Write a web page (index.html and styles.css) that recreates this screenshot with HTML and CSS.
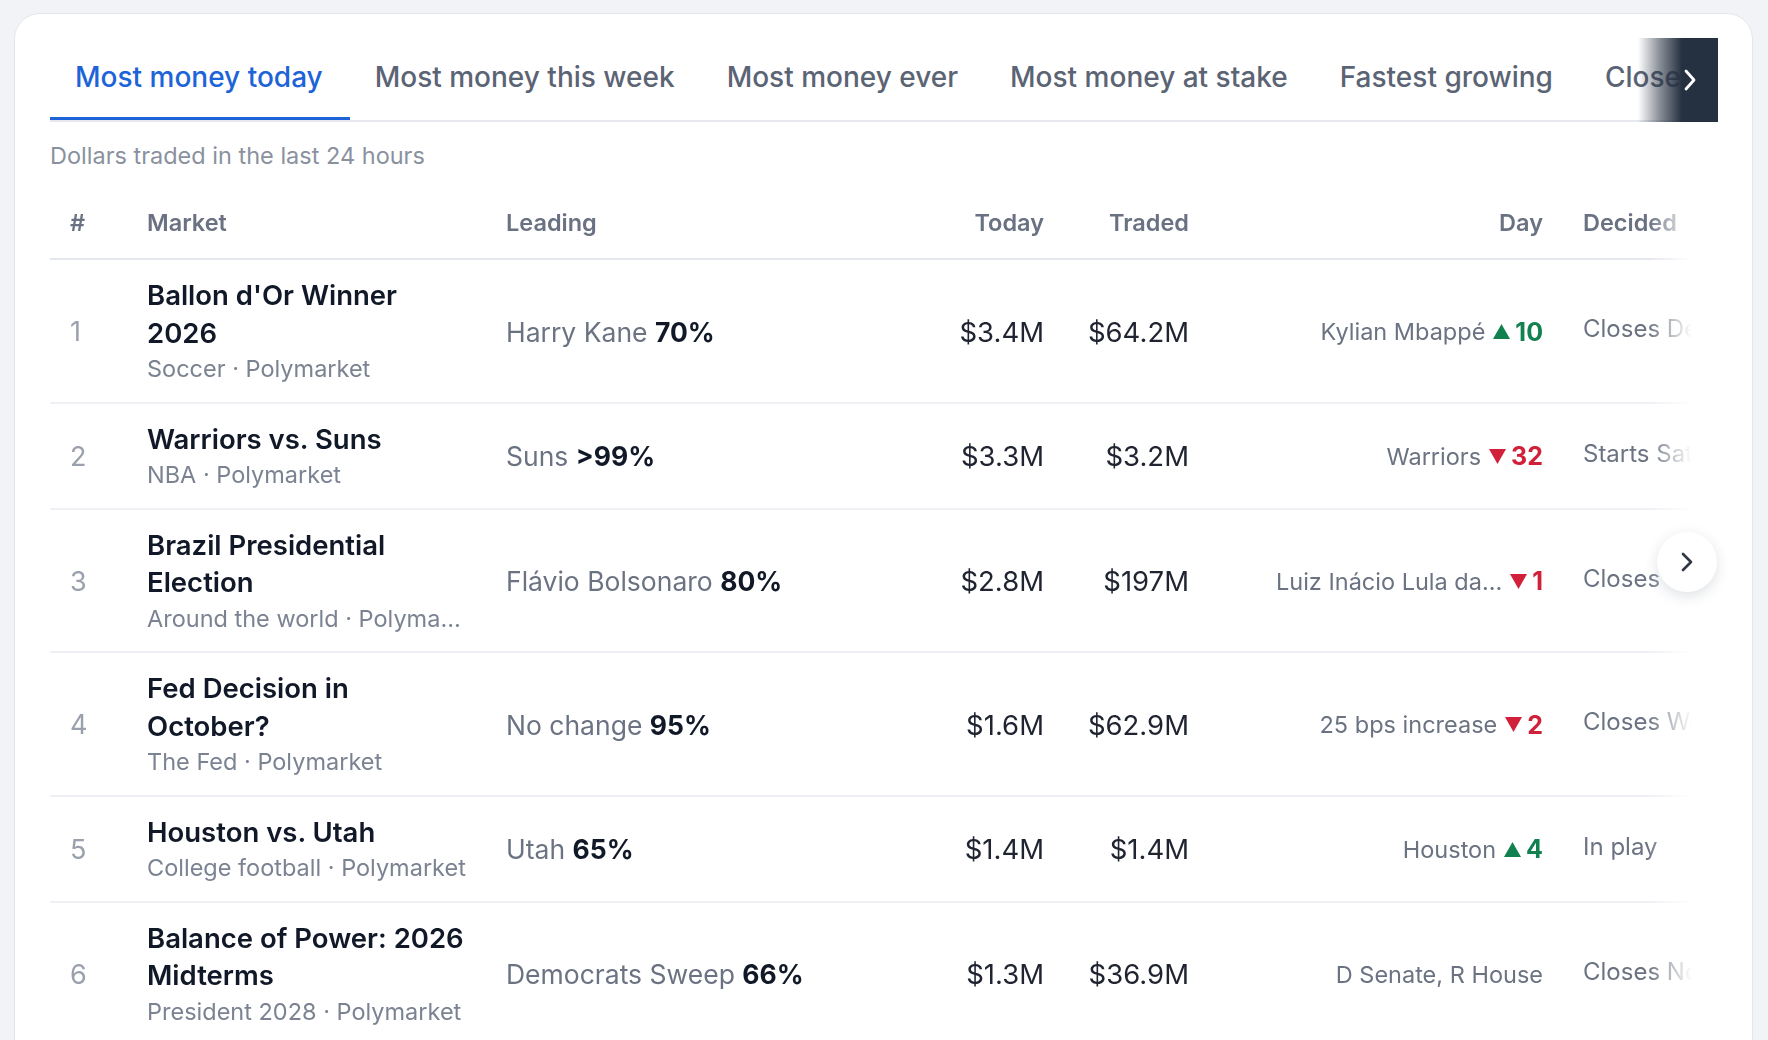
FILE: index.html
```html
<!DOCTYPE html>
<html lang="en">

<head>
    <meta charset="UTF-8">
    <meta name="viewport" content="width=device-width, initial-scale=1.0">
    <title>Top Markets</title>

    <link rel="stylesheet" href="styles.css">

</head>

<body>

    <div class="card">

        <div class="tabs">
            <div class="tab-list">
                <button class="tab active">Most money today</button>
                <button class="tab">Most money this week</button>
                <button class="tab">Most money ever</button>
                <button class="tab">Most money at stake</button>
                <button class="tab">Fastest growing</button>
                <button class="tab">Closest races</button>
                <button class="tab">Ending soon</button>
            </div>
            <div class="tab-more">
                <svg width="14" height="24" viewBox="0 0 14 24"><path d="M3 3l8 9-8 9" fill="none" stroke="#fff" stroke-width="2.8" stroke-linecap="round" stroke-linejoin="round"/></svg>
            </div>
        </div>

        <p class="subtitle">Dollars traded in the last 24 hours</p>

        <div class="table-wrap">
            <div class="table">

                <div class="row head">
                    <div class="cell">#</div>
                    <div class="cell">Market</div>
                    <div class="cell">Leading</div>
                    <div class="cell num">Today</div>
                    <div class="cell num">Traded</div>
                    <div class="cell num">Day</div>
                    <div class="cell">Decided</div>
                </div>

                <div class="row">
                    <div class="cell rank">1</div>
                    <div class="cell market">
                        <div class="title">Ballon d'Or Winner 2026</div>
                        <div class="meta">Soccer · Polymarket</div>
                    </div>
                    <div class="cell leading">Harry Kane <b>70%</b></div>
                    <div class="cell num money">$3.4M</div>
                    <div class="cell num money">$64.2M</div>
                    <div class="cell num day"><span class="name">Kylian Mbappé</span><span class="up"><svg width="17" height="15" viewBox="0 0 17 15"><path d="M8.5 0L17 15H0z"/></svg>10</span></div>
                    <div class="cell decided">Closes Dec 1</div>
                </div>

                <div class="row">
                    <div class="cell rank">2</div>
                    <div class="cell market">
                        <div class="title">Warriors vs. Suns</div>
                        <div class="meta">NBA · Polymarket</div>
                    </div>
                    <div class="cell leading">Suns <b>&gt;99%</b></div>
                    <div class="cell num money">$3.3M</div>
                    <div class="cell num money">$3.2M</div>
                    <div class="cell num day"><span class="name">Warriors</span><span class="down"><svg width="17" height="15" viewBox="0 0 17 15"><path d="M0 0H17L8.5 15z"/></svg>32</span></div>
                    <div class="cell decided">Starts Sat 8:00 PM</div>
                </div>

                <div class="row">
                    <div class="cell rank">3</div>
                    <div class="cell market">
                        <div class="title">Brazil Presidential Election</div>
                        <div class="meta">Around the world · Polymarket</div>
                    </div>
                    <div class="cell leading">Flávio Bolsonaro <b>80%</b></div>
                    <div class="cell num money">$2.8M</div>
                    <div class="cell num money">$197M</div>
                    <div class="cell num day"><span class="name" title="Luiz Inácio Lula da Silva">Luiz Inácio Lula da...</span><span class="down"><svg width="17" height="15" viewBox="0 0 17 15"><path d="M0 0H17L8.5 15z"/></svg>1</span></div>
                    <div class="cell decided">Closes Oct 4, 2026</div>
                </div>

                <div class="row">
                    <div class="cell rank">4</div>
                    <div class="cell market">
                        <div class="title">Fed Decision in October?</div>
                        <div class="meta">The Fed · Polymarket</div>
                    </div>
                    <div class="cell leading">No change <b>95%</b></div>
                    <div class="cell num money">$1.6M</div>
                    <div class="cell num money">$62.9M</div>
                    <div class="cell num day"><span class="name">25 bps increase</span><span class="down"><svg width="17" height="15" viewBox="0 0 17 15"><path d="M0 0H17L8.5 15z"/></svg>2</span></div>
                    <div class="cell decided">Closes Wed</div>
                </div>

                <div class="row">
                    <div class="cell rank">5</div>
                    <div class="cell market">
                        <div class="title">Houston vs. Utah</div>
                        <div class="meta">College football · Polymarket</div>
                    </div>
                    <div class="cell leading">Utah <b>65%</b></div>
                    <div class="cell num money">$1.4M</div>
                    <div class="cell num money">$1.4M</div>
                    <div class="cell num day"><span class="name">Houston</span><span class="up"><svg width="17" height="15" viewBox="0 0 17 15"><path d="M8.5 0L17 15H0z"/></svg>4</span></div>
                    <div class="cell decided">In play</div>
                </div>

                <div class="row">
                    <div class="cell rank">6</div>
                    <div class="cell market">
                        <div class="title">Balance of Power: 2026 Midterms</div>
                        <div class="meta">President 2028 · Polymarket</div>
                    </div>
                    <div class="cell leading">Democrats Sweep <b>66%</b></div>
                    <div class="cell num money">$1.3M</div>
                    <div class="cell num money">$36.9M</div>
                    <div class="cell num day"><span class="name">D Senate, R House</span></div>
                    <div class="cell decided">Closes Nov 3</div>
                </div>

            </div>
        </div>

        <button class="scroll-btn">
            <svg width="14" height="22" viewBox="0 0 14 22"><path d="M3 3l8 8-8 8" fill="none" stroke="#2f3646" stroke-width="2.6" stroke-linecap="round" stroke-linejoin="round"/></svg>
        </button>

    </div>

</body>

</html>
```

FILE: styles.css
```css
body {
    margin: 0;
    background-color: #f2f3f7;
    font-family: Inter, "Liberation Sans", sans-serif;
    height: 100vh;
    overflow: hidden;
}

.card {
    position: relative;
    min-height: 1100px;
    margin: 13px 15px 0 14px;
    background-color: #fff;
    border: 1px solid #e4e6ee;
    border-radius: 26px;
    padding: 24px 34px 40px 35px;
}

/* tabs */

.tabs {
    position: relative;
}

.tab-list {
    display: flex;
    overflow: hidden;
    white-space: nowrap;
    border-bottom: 2px solid #e6e8ee;
}

.tab {
    flex: none;
    height: 82px;
    padding: 0 27px 4px 25px;
    border: none;
    background: none;
    font-family: inherit;
    font-size: 28px;
    font-weight: 500;
    color: #5b6474;
}

.tab.active {
    color: #1d64d8;
    box-shadow: inset 0 -3px 0 #1d64d8;
}

.tab-more {
    position: absolute;
    top: 0;
    right: 0;
    width: 80px;
    height: 84px;
    display: flex;
    align-items: center;
    justify-content: flex-end;
    padding-right: 21px;
    box-sizing: border-box;
    background: linear-gradient(to right, rgba(37, 48, 64, 0) 0, rgba(37, 48, 64, 0.55) 22px, #253040 44px);
}

.subtitle {
    margin: 17px 0 0;
    font-size: 23.5px;
    line-height: 33px;
    color: #8a919e;
}

/* table */

.table-wrap {
    margin-right: 26px;
    overflow: hidden;
    -webkit-mask-image: linear-gradient(to right, #000 calc(100% - 44px), transparent);
    mask-image: linear-gradient(to right, #000 calc(100% - 44px), transparent);
}

.table {
    width: 1713px;
}

.row {
    display: grid;
    grid-template-columns: 77px 359px 438px 140px 145px 354px 200px;
    align-items: center;
    padding: 17px 0 15.5px;
    border-bottom: 2px solid #eef0f4;
}

.row.head {
    padding: 34px 0 18px;
    border-bottom-color: #e5e7ee;
    font-size: 23.5px;
    font-weight: 600;
    line-height: 34px;
    color: #697182;
}

.cell {
    padding: 0 20px;
    min-width: 0;
    white-space: nowrap;
}

.num {
    text-align: right;
}

.rank {
    font-size: 27px;
    color: #9aa1ad;
}

.market {
    white-space: normal;
    padding-right: 18px;
}

.title {
    font-size: 27.5px;
    font-weight: 600;
    line-height: 37.5px;
    color: #111827;
}

.meta {
    font-size: 23.5px;
    line-height: 34px;
    color: #7b8392;
    white-space: nowrap;
    overflow: hidden;
    text-overflow: ellipsis;
}

.leading {
    font-size: 26.5px;
    color: #6b7382;
}

.leading b {
    font-weight: 700;
    color: #111827;
}

.money {
    font-size: 27.5px;
    color: #1f2430;
}

.day {
    display: flex;
    justify-content: flex-end;
    align-items: center;
    font-size: 23.5px;
    color: #6b7382;
}

.up,
.down {
    display: flex;
    align-items: center;
    gap: 5px;
    margin-left: 8px;
    font-size: 25px;
    font-weight: 700;
}

.up {
    color: #13804f;
    fill: #13804f;
}

.down {
    color: #d1203a;
    fill: #d1203a;
}

.decided {
    font-size: 24px;
    color: #6b7382;
    padding-bottom: 6px;
}

.scroll-btn {
    position: absolute;
    top: 518px;
    right: 35px;
    width: 60px;
    height: 60px;
    border: none;
    border-radius: 50%;
    background-color: #fff;
    box-shadow: 0 4px 14px rgba(30, 40, 70, 0.14);
    display: flex;
    align-items: center;
    justify-content: center;
    padding: 0;
}
```
